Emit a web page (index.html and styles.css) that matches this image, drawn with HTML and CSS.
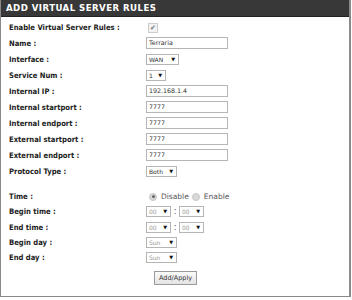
FILE: index.html
```html
<!DOCTYPE html>
<html>
<head>
<meta charset="utf-8">
<link rel="stylesheet" href="styles.css">
</head>
<body>
<div class="box">
  <div class="head">ADD VIRTUAL SERVER RULES</div>
  <div class="form">
    <div class="row r-first"><span class="lbl">Enable Virtual Server Rules :</span><span class="chk">&#10004;</span></div>
    <div class="row"><span class="lbl">Name :</span><span class="inp">Terraria</span></div>
    <div class="row"><span class="lbl">Interface :</span><span class="sel w32">WAN<i>&#9660;</i></span></div>
    <div class="row"><span class="lbl">Service Num :</span><span class="sel w20">1<i>&#9660;</i></span></div>
    <div class="row"><span class="lbl">Internal IP :</span><span class="inp">192.168.1.4</span></div>
    <div class="row"><span class="lbl">Internal startport :</span><span class="inp">7777</span></div>
    <div class="row"><span class="lbl">Internal endport :</span><span class="inp">7777</span></div>
    <div class="row"><span class="lbl">External startport :</span><span class="inp">7777</span></div>
    <div class="row"><span class="lbl">External endport :</span><span class="inp">7777</span></div>
    <div class="row"><span class="lbl">Protocol Type :</span><span class="sel w30">Both<i>&#9660;</i></span></div>
    <div class="spacer"></div>
    <div class="row t"><span class="lbl">Time :</span><span class="radio on"></span><span class="rtxt">Disable</span><span class="radio"></span><span class="rtxt">Enable</span></div>
    <div class="row t"><span class="lbl">Begin time :</span><span class="sel w24 dim">00<i>&#9660;</i></span><span class="colon">:</span><span class="sel w24 dim">00<i>&#9660;</i></span></div>
    <div class="row t"><span class="lbl">End time :</span><span class="sel w24 dim">00<i>&#9660;</i></span><span class="colon">:</span><span class="sel w24 dim">00<i>&#9660;</i></span></div>
    <div class="row t"><span class="lbl">Begin day :</span><span class="sel w30 dim">Sun<i>&#9660;</i></span></div>
    <div class="row t"><span class="lbl">End day :</span><span class="sel w30 dim">Sun<i>&#9660;</i></span></div>
    <div class="btnrow"><span class="btn">Add/Apply</span></div>
  </div>
</div>
</body>
</html>
```

FILE: styles.css
```css
html, body {
  margin: 0;
  padding: 0;
  background: #fff;
}
body {
  font-family: "DejaVu Sans", "Liberation Sans", sans-serif;
}
.box {
  width: 348px;
  height: 296px;
  border: 1px solid #8a8a8a;
  border-top: none;
  border-right: 2px solid #8a8a8a;
  box-sizing: content-box;
}
.head {
  height: 17px;
  background: #383838;
  border-bottom: 1px solid #222;
  box-sizing: border-box;
  color: #fff;
  font-family: "DejaVu Sans", sans-serif;
  font-weight: bold;
  font-size: 8.6px;
  letter-spacing: 0.45px;
  line-height: 17px;
  padding-left: 5px;
}
.form {
  padding-left: 8px;
  padding-top: 3px;
}
.row {
  display: flex;
  align-items: center;
  height: 16px;
}
.row.r-first { height: 15px; }
.row.t { height: 15.3px; }
.lbl {
  width: 137px;
  flex: none;
  font-family: "DejaVu Sans Condensed", "DejaVu Sans", sans-serif;
  font-stretch: condensed;
  font-weight: bold;
  font-size: 7.6px;
  color: #222;
}
.chk {
  width: 8px;
  height: 8px;
  margin-left: 2px;
  border: 1px solid #ccc;
  background: #f2f2f2;
  color: #777;
  font-size: 7px;
  line-height: 8px;
  text-align: center;
}
.inp {
  width: 82px;
  height: 12px;
  box-sizing: border-box;
  border: 1px solid #b5b5b5;
  font-size: 6.3px;
  line-height: 10px;
  padding-left: 2px;
  color: #333;
}
.sel {
  height: 11px;
  box-sizing: border-box;
  border: 1px solid #b5b5b5;
  font-size: 6px;
  line-height: 9px;
  padding-left: 2px;
  color: #333;
  position: relative;
}
.sel i {
  font-style: normal;
  position: absolute;
  right: 3px;
  top: 0;
  font-size: 5px;
  line-height: 9px;
  color: #111;
}
.sel.dim { color: #999; }
.w20 { width: 20px; }
.w24 { width: 25px; }
.w30 { width: 31px; }
.w32 { width: 33px; }
.spacer { height: 10px; }
.colon {
  width: 8px;
  text-align: center;
  font-size: 8px;
  color: #444;
}
.radio {
  width: 8px;
  height: 8px;
  border-radius: 50%;
  background: #d8d8d8;
  box-sizing: border-box;
  border: 1px solid #c8c8c8;
  margin-left: 3px;
  position: relative;
}
.radio.on::after {
  content: "";
  position: absolute;
  left: 1.5px;
  top: 1.5px;
  width: 3px;
  height: 3px;
  border-radius: 50%;
  background: #666;
}
.rtxt {
  font-size: 7.5px;
  color: #555;
  margin-left: 4px;
}
.btnrow {
  padding-left: 145px;
  padding-top: 0;
}
.btn {
  display: inline-block;
  width: 43px;
  height: 14px;
  box-sizing: border-box;
  border: 1px solid #9a9a9a;
  background: linear-gradient(#fafafa, #e4e4e4);
  font-size: 6.5px;
  line-height: 12px;
  text-align: center;
  color: #333;
}
```
